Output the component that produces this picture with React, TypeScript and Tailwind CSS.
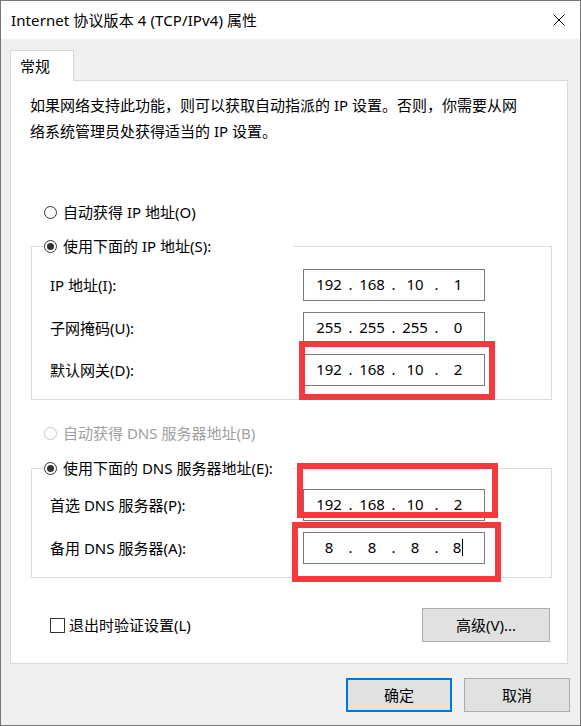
import React from "react";

const FONT = '"Noto Sans", "Noto Sans CJK SC", sans-serif';

function Radio({ checked, disabled }: { checked?: boolean; disabled?: boolean }) {
  return (
    <span
      className={
        "flex items-center justify-center w-[13px] h-[13px] rounded-full border bg-white shrink-0 " +
        (disabled ? "border-[#c4c4c4]" : "border-[#333333]")
      }
    >
      {checked && <span className="block w-[7px] h-[7px] rounded-full bg-[#333333]" />}
    </span>
  );
}

function IpBox({ parts, cursor }: { parts: string[]; cursor?: boolean }) {
  return (
    <div className="w-[182px] h-[32px] border border-[#7a7a7a] bg-white flex items-center pl-[8px] pb-[2px] text-[15px] text-black">
      {parts.map((p, i) => (
        <React.Fragment key={i}>
          <span className="w-[34px] text-center">
            {p}
            {cursor && i === 3 && (
              <span className="inline-block w-px h-[17px] bg-black align-middle ml-[1px] -mt-[2px]" />
            )}
          </span>
          {i < 3 && <span className="w-[9px] text-center">.</span>}
        </React.Fragment>
      ))}
    </div>
  );
}

function Row({ label, parts, cursor }: { label: string; parts: string[]; cursor?: boolean }) {
  return (
    <div className="flex items-center pl-[18px]">
      <span className="w-[253px] text-[15px] text-black">{label}</span>
      <IpBox parts={parts} cursor={cursor} />
    </div>
  );
}

function Button({ children, def, w }: { children: React.ReactNode; def?: boolean; w: string }) {
  return (
    <div
      className={
        "h-[34px] flex items-center justify-center bg-[#e1e1e1] text-[15px] text-black " +
        w +
        " " +
        (def ? "border-2 border-[#0078d7]" : "border border-[#adadad]")
      }
    >
      {children}
    </div>
  );
}

export default function App() {
  return (
    <div
      className="relative w-[581px] h-[726px] border border-[#777777] bg-[#f0f0f0] flex flex-col"
      style={{ fontFamily: FONT }}
    >
      {/* Title bar */}
      <div className="h-[38px] bg-white flex items-center justify-between pl-[10px] pr-[15px] shrink-0">
        <span className="text-[15px] tracking-[0.1px] text-black">Internet 协议版本 4 (TCP/IPv4) 属性</span>
        <svg width="12" height="12" viewBox="0 0 12 12">
          <path d="M0.5 0.5 L11.5 11.5 M11.5 0.5 L0.5 11.5" stroke="#000" strokeWidth="1" />
        </svg>
      </div>

      {/* Body */}
      <div className="flex flex-col pl-[9px] pr-[12px] pt-[11px]">
        {/* Tab */}
        <div className="relative z-10 -mb-px w-[64px] h-[31px] bg-white border border-b-0 border-[#d9d9d9] flex items-center pl-[9px] text-[15px] text-black">
          常规
        </div>
        {/* Panel */}
        <div className="h-[584px] bg-white border border-[#d9d9d9] flex flex-col pl-[20px]">
          <div className="mt-[11px] -ml-[1px] text-[15px] leading-[26px] text-black">
            <div>如果网络支持此功能，则可以获取自动指派的 IP 设置。否则，你需要从网</div>
            <div>络系统管理员处获得适当的 IP 设置。</div>
          </div>

          <div className="mt-[58px] ml-[13px] h-[20px] flex items-center gap-[6px] text-[15px] text-black">
            <Radio />
            <span>自动获得 IP 地址(O)</span>
          </div>

          {/* Group 1 */}
          <div className="mt-[24px] w-[521px] border border-[#dcdcdc] flex flex-col pb-[13px]">
            <div className="-mt-[11px] ml-[12px] w-[249px] h-[20px] bg-white flex items-center gap-[6px] text-[15px] text-black">
              <Radio checked />
              <span>使用下面的 IP 地址(S):</span>
            </div>
            <div className="mt-[13px]">
              <Row label="IP 地址(I):" parts={["192", "168", "10", "1"]} />
            </div>
            <div className="mt-[11px]">
              <Row label="子网掩码(U):" parts={["255", "255", "255", "0"]} />
            </div>
            <div className="mt-[10px]">
              <Row label="默认网关(D):" parts={["192", "168", "10", "2"]} />
            </div>
          </div>

          <div className="mt-[23px] ml-[13px] h-[20px] flex items-center gap-[6px] text-[15px] text-[#a0a0a0]">
            <Radio disabled />
            <span>自动获得 DNS 服务器地址(B)</span>
          </div>

          {/* Group 2 */}
          <div className="mt-[25px] w-[521px] border border-[#dcdcdc] flex flex-col pb-[13px]">
            <div className="-mt-[11px] ml-[12px] w-[249px] h-[20px] bg-white flex items-center gap-[6px] text-[15px] text-black">
              <Radio checked />
              <span className="whitespace-nowrap">使用下面的 DNS 服务器地址(E):</span>
            </div>
            <div className="mt-[11px]">
              <Row label="首选 DNS 服务器(P):" parts={["192", "168", "10", "2"]} />
            </div>
            <div className="mt-[11px]">
              <Row label="备用 DNS 服务器(A):" parts={["8", "8", "8", "8"]} cursor />
            </div>
          </div>

          <div className="mt-[30px] w-[521px] flex items-center justify-between">
            <div className="ml-[19px] flex items-center gap-[4px] text-[15px] text-black">
              <span className="w-[15px] h-[15px] border border-[#333333] bg-white" />
              <span>退出时验证设置(L)</span>
            </div>
            <div className="mr-[2px]">
              <Button w="w-[128px]">高级(V)...</Button>
            </div>
          </div>
        </div>
      </div>

      {/* Footer */}
      <div className="mt-[14px] flex justify-end gap-[12px] pr-[10px]">
        <Button def w="w-[106px]">确定</Button>
        <Button w="w-[106px]">取消</Button>
      </div>

      {/* Red annotation boxes */}
      <div className="absolute left-[298px] top-[340px] w-[196px] h-[59px] border-[6px] border-[#f5393c]" />
      <div className="absolute left-[296px] top-[462px] w-[201px] h-[55px] border-[6px] border-[#f5393c]" />
      <div className="absolute left-[291px] top-[521px] w-[209px] h-[60px] border-[6px] border-[#f5393c]" />
    </div>
  );
}
